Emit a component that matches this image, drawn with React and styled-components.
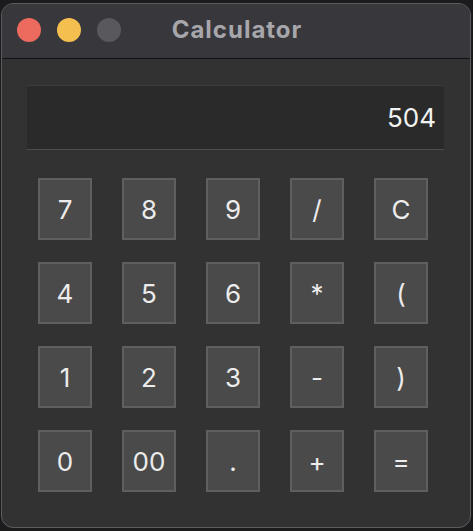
import React from "react"
import styled, { createGlobalStyle } from "styled-components"

const GlobalStyle = createGlobalStyle`
  html, body {
    margin: 0;
    padding: 0;
    background: #1b1b1d;
    font-family: Inter, "Liberation Sans", sans-serif;
  }
`

const Desktop = styled.div`
  width: 473px;
  height: 531px;
  overflow: hidden;
  padding: 3px 0 0 1px;
  box-sizing: border-box;
`

const Window = styled.div`
  position: relative;
  width: 470px;
  height: 525px;
  border-radius: 12px;
  border: 1px solid #5c5c5f;
  background: #323232;
  box-sizing: border-box;
  overflow: hidden;
  display: flex;
  flex-direction: column;
`

const TitleBar = styled.div`
  position: relative;
  height: 54px;
  flex-shrink: 0;
  background: #38373c;
  border-bottom: 1px solid #121214;
  display: flex;
  align-items: center;
  justify-content: center;
`

const Lights = styled.div`
  position: absolute;
  left: 15px;
  top: 14px;
  display: flex;
  gap: 16px;
`

const Light = styled.div`
  width: 24px;
  height: 24px;
  border-radius: 50%;
  background: ${p => p.color};
`

const Title = styled.div`
  font-size: 24px;
  font-weight: 700;
  color: #a7a6ab;
  letter-spacing: 1px;
  margin: 0 0 3px 2px;
`

const Body = styled.div`
  padding: 26px 0 0 25px;
  display: flex;
  flex-direction: column;
`

const Display = styled.div`
  width: 417px;
  height: 65px;
  box-sizing: border-box;
  background: #2a2a2a;
  border-top: 1px solid #3b3b3b;
  border-bottom: 1px solid #4c4c4c;
  display: flex;
  align-items: center;
  justify-content: flex-end;
  padding-right: 8px;
  font-size: 26px;
  color: #f2f2f2;
`

const Keypad = styled.div`
  margin: 28px 0 0 11px;
  display: grid;
  grid-template-columns: repeat(5, 54px);
  grid-auto-rows: 62px;
  column-gap: 30px;
  row-gap: 22px;
`

const Key = styled.button`
  margin: 0;
  padding: 0;
  box-sizing: border-box;
  background: #4a4a4a;
  border: 2px solid #5f5f5f;
  border-radius: 0;
  color: #ececec;
  font-family: Inter, "Liberation Sans", sans-serif;
  font-size: 26px;
  display: flex;
  align-items: center;
  justify-content: center;
`

const keys = [
  "7", "8", "9", "/", "C",
  "4", "5", "6", "*", "(",
  "1", "2", "3", "-", ")",
  "0", "00", ".", "+", "=",
]

export default function App() {
  return (
    <>
      <GlobalStyle />
      <Desktop>
        <Window>
          <TitleBar>
            <Lights>
              <Light color="#ed6a5e" />
              <Light color="#f5bf4f" />
              <Light color="#59585d" />
            </Lights>
            <Title>Calculator</Title>
          </TitleBar>
          <Body>
            <Display>504</Display>
            <Keypad>
              {keys.map(k => (
                <Key key={k}>{k}</Key>
              ))}
            </Keypad>
          </Body>
        </Window>
      </Desktop>
    </>
  )
}
